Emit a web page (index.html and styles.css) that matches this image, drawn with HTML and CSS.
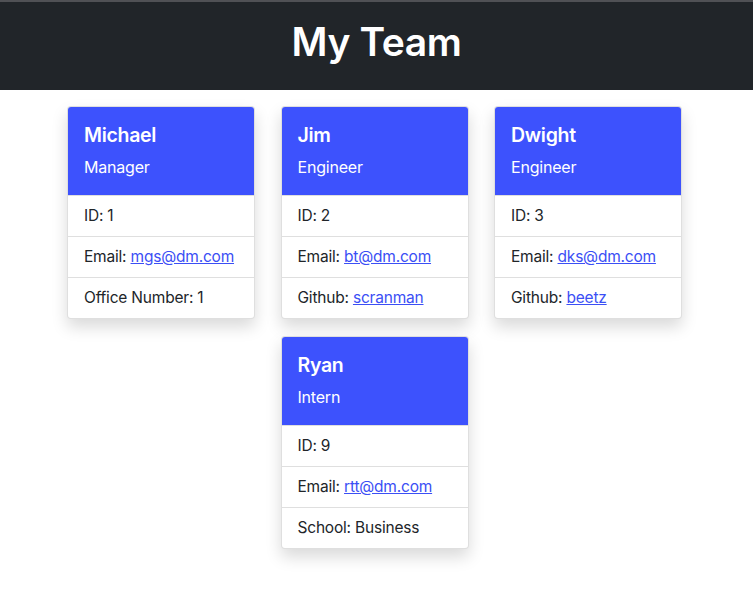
FILE: index.html
```html
<!DOCTYPE html>
<html lang="en">
<head>
<meta charset="utf-8">
<title>My Team</title>
<link rel="stylesheet" href="styles.css">
</head>
<body>
<header class="top">
  <h1 class="title">My Team</h1>
</header>
<main class="team">
  <div class="card">
    <div class="card-head">
      <h2 class="name">Michael</h2>
      <p class="role">Manager</p>
    </div>
    <ul class="info">
      <li>ID: 1</li>
      <li>Email: <a href="#">mgs@dm.com</a></li>
      <li>Office Number: 1</li>
    </ul>
  </div>
  <div class="card">
    <div class="card-head">
      <h2 class="name">Jim</h2>
      <p class="role">Engineer</p>
    </div>
    <ul class="info">
      <li>ID: 2</li>
      <li>Email: <a href="#">bt@dm.com</a></li>
      <li>Github: <a href="#">scranman</a></li>
    </ul>
  </div>
  <div class="card">
    <div class="card-head">
      <h2 class="name">Dwight</h2>
      <p class="role">Engineer</p>
    </div>
    <ul class="info">
      <li>ID: 3</li>
      <li>Email: <a href="#">dks@dm.com</a></li>
      <li>Github: <a href="#">beetz</a></li>
    </ul>
  </div>
  <div class="card">
    <div class="card-head">
      <h2 class="name">Ryan</h2>
      <p class="role">Intern</p>
    </div>
    <ul class="info">
      <li>ID: 9</li>
      <li>Email: <a href="#">rtt@dm.com</a></li>
      <li>School: Business</li>
    </ul>
  </div>
</main>
</body>
</html>
```
FILE: styles.css
```css
* { box-sizing: border-box; }
body {
  margin: 0;
  font-family: Inter, "Noto Sans", "Liberation Sans", sans-serif;
  font-size: 16px;
  line-height: 1.5;
  color: #212529;
  background: #fff;
}
.top {
  background: #212529;
  border-top: 2px solid #505155;
  height: 90px;
  display: flex;
  justify-content: center;
  padding-top: 17px;
}
.title {
  margin: 0;
  color: #fff;
  font-size: 39px;
  font-weight: 600;
  line-height: 1.2;
  letter-spacing: -0.4px;
}
.team {
  display: flex;
  flex-wrap: wrap;
  justify-content: center;
  column-gap: 25.5px;
  row-gap: 17px;
  padding: 16px 4px 40px 0;
  max-width: 753px;
}
.card {
  width: 188px;
  border: 1px solid rgba(0,0,0,.125);
  border-radius: 4px;
  overflow: hidden;
  background: #fff;
  box-shadow: 0 8px 16px rgba(0,0,0,.15);
}
.card-head {
  background: #3d52fd;
  color: #fff;
  padding: 16px 16px;
}
.name {
  margin: 0 0 8px;
  font-size: 19.5px;
  font-weight: 600;
  line-height: 24px;
  letter-spacing: -0.3px;
}
.role {
  margin: 0;
  font-size: 16px;
  line-height: 24px;
  letter-spacing: -0.2px;
}
.info {
  list-style: none;
  margin: 0;
  padding: 0;
}
.info li {
  padding: 8px 16px;
  border-top: 1px solid rgba(0,0,0,.125);
  font-size: 15.5px;
  line-height: 24px;
  letter-spacing: -0.2px;
  white-space: nowrap;
}
.info a {
  color: #3b4ff5;
  text-decoration: underline;
}
```
